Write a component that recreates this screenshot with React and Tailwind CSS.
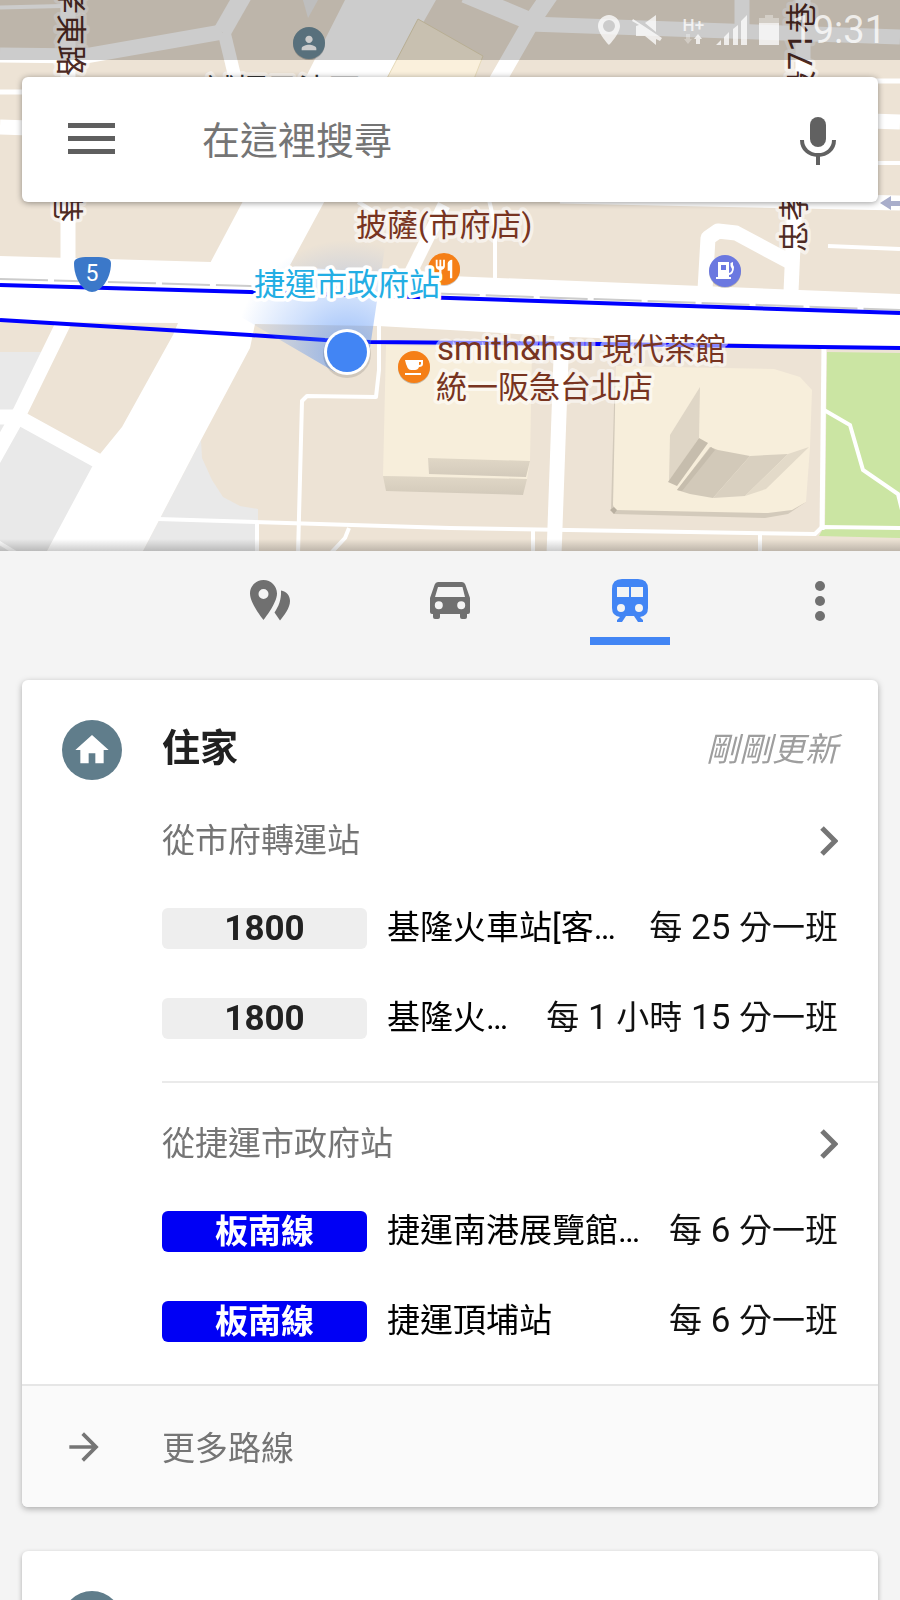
import React from 'react';
import { MdArrowForward, MdHome, MdPerson, MdRestaurant } from 'react-icons/md';

const departures = [
  {
    from: '從市府轉運站',
    routes: [
      { line: '1800', to: '基隆火車站[客…', every: '每 25 分一班', badge: 'bg-[#eeeeee] text-[#212121] text-[35px]' },
      { line: '1800', to: '基隆火…', every: '每 1 小時 15 分一班', badge: 'bg-[#eeeeee] text-[#212121] text-[35px]' },
    ],
  },
  {
    from: '從捷運市政府站',
    routes: [
      { line: '板南線', to: '捷運南港展覽館…', every: '每 6 分一班', badge: 'bg-[#0000f5] text-white' },
      { line: '板南線', to: '捷運頂埔站', every: '每 6 分一班', badge: 'bg-[#0000f5] text-white' },
    ],
  },
];

const roads = [
  { w: 4, d: 'M0 7.5L62 6' },
  { w: 15, d: 'M0 55L85 56L222 32' },
  { w: 18, d: 'M222 32L246 -10' },
  { w: 13, d: 'M224 32L238 90' },
  { w: 15, d: 'M68 0V262' },
  { w: 5, d: 'M0 92H30' },
  { w: 15, d: 'M0 127L30 128' },
  { w: 18, d: 'M465 -6L532 22' },
  { w: 17, d: 'M556 -14L530 24L495 85' },
  { w: 15, d: 'M530 24L900 37' },
  { w: 15, d: 'M742 -5V32' },
  { w: 15, d: 'M803 -5V80' },
  { w: 5, d: 'M870 81H900' },
  { w: 15, d: 'M870 121L900 122' },
  { w: 4, d: 'M870 163H900' },
  { w: 15, d: 'M560 196L900 203' },
  { w: 15, d: 'M795 200L791 292' },
  { w: 15, d: 'M705 290L708 238L718 231L736 233L792 263' },
  { w: 4, d: 'M828 246L900 249' },
  { w: 4, d: 'M489 200L495 225V280' },
  { w: 13, d: 'M444 205L402 290' },
  { w: 4, d: 'M358 202L386 219' },
  { w: 15, d: 'M64 322L20 412L-8 462' },
  { w: 15, d: 'M-5 417H18L98 461' },
  { w: 4, d: 'M-2 542L16 553' },
  { w: 4, d: 'M158 519L450 528L815 534L822 527L900 528' },
  { w: 4, d: 'M257 522V555' },
  { w: 4, d: 'M298 555L302 401L307 396L376 397L379 370V322' },
  { w: 4, d: 'M349 528L345 538L330 554' },
  { w: 4, d: 'M533 530V555' },
  { w: 15, d: 'M562 330L554 555' },
  { w: 4, d: 'M760 534V555' },
  { w: 5, d: 'M824 345L822 530' },
];

const CupIcon = (props) => (
  <svg {...props} width="22" height="22" viewBox="0 0 22 22" fill="#fff">
    <path
      fillRule="evenodd"
      d="M2 4H20V8Q20 11 16 11Q15 14 12 14H8Q4 14 2 4zM16 6V9Q18 9 18 7.500V6z"
    />
    <path d="M2 17H18V19H2z" />
  </svg>
);

const PumpIcon = (props) => (
  <svg {...props} width="22" height="22" viewBox="0 0 22 22" fill="#fff">
    <path fillRule="evenodd" d="M4 2H15V17H17V19H2V17H4zM7 5V10H12V5z" />
    <path d="M15 13Q18 12 18 9L16.500 6V3L19 2V5L20 7Q20 14 15 15z" />
  </svg>
);

const Marker = ({ cx, cy, fill, icon: Icon }) => (
  <g>
    <circle cx={cx} cy={cy + 1} r="16" fill="#000" opacity="0.2" />
    <circle cx={cx} cy={cy} r="16" fill={fill} />
    <Icon x={cx - 11} y={cy - 11} size={22} color="#fff" />
  </g>
);

const MapView = () => (
  <svg
    className="absolute inset-0 h-full w-full"
    viewBox="0 0 900 551"
    preserveAspectRatio="xMidYMin slice"
    role="img"
    aria-label="地圖"
  >
    <defs>
      <radialGradient id="beam" gradientUnits="userSpaceOnUse" cx="347" cy="352" r="112">
        <stop offset="0" stopColor="#4285f4" stopOpacity="0.55" />
        <stop offset="0.5" stopColor="#4285f4" stopOpacity="0.25" />
        <stop offset="1" stopColor="#4285f4" stopOpacity="0" />
      </radialGradient>
      <linearGradient id="wall" x1="0" y1="0" x2="0" y2="1">
        <stop offset="0" stopColor="#e0d7c6" />
        <stop offset="1" stopColor="#d3cabb" />
      </linearGradient>
    </defs>

    <rect width="900" height="551" fill="#ede3d5" />

    {/* grey blocks and the park */}
    <path d="M0 352H45L10 415L100 460L47 551H0z" fill="#e9e9e9" />
    <path d="M201 440L202 458L212 480L223 497L240 506L258 509V551H143z" fill="#e9e9e9" />
    <path d="M30 405L40 420L62 443L70 450L100 454L50 400z" fill="#ede3d5" />
    <path d="M827 352L900 353V538L819 536L825 525z" fill="#cbe5a3" />
    <path d="M824 410L850 425L863 470L898 494L902 510" fill="none" stroke="#fff" strokeWidth="4" />

    {/* main avenues */}
    <path d="M345 0H436L388 84L289 267H208L242 203z" fill="#fff" />
    <path d="M0 256L211 262L289 267L450 276L900 294V349L730 343L570 337L450 330L378 326L255 324L250 348L201 440L143 551H47L92 467L100 454L122 427L173 335L178 323L0 322z" fill="#fff" />
    <g fill="none" stroke="#fff" strokeLinejoin="round">
      {roads.map((road) => (
        <path key={road.d} d={road.d} strokeWidth={road.w} />
      ))}
    </g>

    {/* buildings */}
    <path d="M418 19L483 56L472 84H384z" fill="#faf0dc" stroke="#e6dab9" />
    <path d="M386 345L532 349L530 461L527 479L383 476z" fill="#f7eedb" />
    <path d="M428 458L530 461L526 477L429 474z" fill="url(#wall)" />
    <path d="M383 476L527 479L523 495L386 491z" fill="url(#wall)" />
    <path d="M615 370L611 510L614 514L765 518L788 514L806 502L790 505L616 500z" fill="#d3cabb" />
    <path d="M616 366L774 369L800 377L812 390L810 447L806 502L792 510L768 513L615 510L613 505z" fill="#f7eedb" />
    <path d="M610 510L614 507L617 510L614 514z" fill="#b9b0a1" />
    <path d="M700 387L670 435L669 482L699 438z" fill="#dfd6c6" />
    <path d="M699 438L708 443L677 486L668 482z" fill="#c6bdad" />
    <path d="M710 447L718 450L750 456L713 498L690 494L677 490z" fill="#d2c9b9" />
    <path d="M750 456L788 454L745 496L713 498z" fill="#d9d0c0" />
    <path d="M788 454L809 447L766 489L745 496z" fill="#e3dac9" />
    <path d="M711 447L715 450L682 491L677 490z" fill="#c6bdad" />

    {/* one-way arrow */}
    <path d="M880 203L891 196V201H900V206H891V210z" fill="#a9aecb" />

    {/* rail and metro lines */}
    <path d="M0 279L250 286L450 294L900 310" fill="none" stroke="#cccccc" strokeWidth="2" strokeDasharray="48 6" />
    <path d="M0 285L250 292L450 298L900 313" fill="none" stroke="#0000ff" strokeWidth="4" />
    <path d="M0 320L250 335L325 340L370 342L600 344L900 348" fill="none" stroke="#0000ff" strokeWidth="4" />

    {/* current position with heading beam */}
    <path d="M347 352L335 372L222 306L275 240H386L370 348z" fill="url(#beam)" />
    <circle cx="347" cy="354" r="24" fill="#000" opacity="0.12" />
    <circle cx="347" cy="352" r="23" fill="#fff" />
    <circle cx="347" cy="352" r="20" fill="#4285f4" />

    <path d="M308 18L303 0H318z" fill="#eeeeee" />
    <Marker cx={309} cy={43} fill="#6f8d9b" icon={MdPerson} />
    <Marker cx={444} cy={269} fill="#f57f17" icon={MdRestaurant} />
    <Marker cx={414} cy={367} fill="#f57f17" icon={CupIcon} />
    <Marker cx={725} cy={271} fill="#6b78e0" icon={PumpIcon} />
    <path d="M74 263C74 257 83 257 92 257S111 257 111 263C111 280 100 292 92 292S74 280 74 263z" fill="#3b78c9" />

    <g
      fontFamily="Roboto, 'Noto Sans CJK TC', sans-serif"
      fontSize="31"
      fill="#783421"
      stroke="#ffffff"
      strokeOpacity="0.55"
      strokeWidth="7"
      strokeLinejoin="round"
      paintOrder="stroke"
    >
      <text x="356" y="236">披薩(市府店)</text>
      <text x="437" y="360">
        <tspan fontSize="33">smith&amp;hsu </tspan>現代茶館
      </text>
      <text x="436" y="398">統一阪急台北店</text>
      <text x="254" y="295" fill="#23aee4" strokeOpacity="1">捷運市政府站</text>
      <g fill="#4e2b24">
        <text transform="translate(60 -17) rotate(90)">孝東路</text>
        <text transform="translate(57 191) rotate(90)">巷</text>
        <text transform="translate(812 101) rotate(-90)">
          段<tspan fontSize="33">71</tspan>巷
        </text>
        <text transform="translate(805 252) rotate(-90)">忠孝</text>
      </g>
      <text x="205" y="101" fill="#333333">誠揮己沾百</text>
    </g>
    <text x="92" y="281" textAnchor="middle" fontFamily="Roboto, sans-serif" fontSize="23" fill="#fff">5</text>
  </svg>
);

const StatusBar = () => (
  <div className="relative flex h-[60px] items-center justify-end gap-3 bg-black/20 pr-[14px] text-white/75">
    <svg className="h-[30px] w-[22px]" viewBox="0 0 22 30" fill="currentColor">
      <path fillRule="evenodd" d="M11 0C5 0 0 5 0 11c0 8 11 19 11 19s11-11 11-19C22 5 17 0 11 0zm0 5a6 6 0 110 12 6 6 0 010-12z" />
    </svg>
    <svg className="h-[30px] w-[30px]" viewBox="0 0 30 30" fill="currentColor">
      <path d="M24 0V17L13 8zM1 4L30 23L28 26L24 24V30L13 21H4V11L7 10L0 6z" />
    </svg>
    <div className="ml-2 flex w-[22px] flex-col items-center">
      <span className="text-[17px] leading-[18px] font-medium">H+</span>
      <svg className="h-[10px] w-[18px]" viewBox="0 0 18 10" fill="currentColor">
        <path opacity="0.4" d="M2 0h4v5h2l-4 5-4-5h2z" />
        <path d="M12 10h4V5h2l-4-5-4 5h2z" />
      </svg>
    </div>
    <svg className="h-[30px] w-[31px]" viewBox="0 0 31 30" fill="currentColor">
      <path d="M0 30L5 25V30zM8 30V22L13 17V30zM17 30V14L22 10V30zM25 30V6L31 0V30z" />
    </svg>
    <svg className="h-[30px] w-5" viewBox="0 0 20 30" fill="currentColor">
      <path opacity="0.45" d="M6 0h8v3h6v5H0V3h6z" />
      <path d="M0 8h20v22H0z" />
    </svg>
    <time className="text-[38px] leading-[60px] font-normal">19:31</time>
  </div>
);

const SearchBar = () => (
  <form className="relative mx-[22px] mt-[17px] flex h-[125px] items-center rounded-md bg-white pt-[2px] pr-[30px] pl-[46px] shadow-[0_1px_6px_rgba(0,0,0,0.4)]">
    <button type="button" aria-label="選單" className="shrink-0 text-[#5f5f5f]">
      <svg className="h-12 w-12" viewBox="0 0 48 48" fill="currentColor">
        <path d="M0 6h47v5H0zM0 19h47v5H0zM0 32h47v5H0z" />
      </svg>
    </button>
    <input
      type="text"
      aria-label="搜尋"
      placeholder="在這裡搜尋"
      className="ml-[86px] h-16 min-w-0 flex-1 bg-transparent text-[38px] outline-none placeholder:text-[#757575]"
    />
    <button type="button" aria-label="語音搜尋" className="flex w-[60px] shrink-0 justify-center text-[#616161]">
      <svg className="h-12 w-9" viewBox="0 0 36 48">
        <rect x="10" y="0" width="16" height="30" rx="8" fill="currentColor" />
        <path d="M2 23C2 32 9 38 18 38S34 32 34 23M18 38V48" fill="none" stroke="currentColor" strokeWidth="4" />
      </svg>
    </button>
  </form>
);

const PlacesIcon = () => (
  <svg className="h-12 w-12" viewBox="0 0 48 48" fill="currentColor">
    <path fillRule="evenodd" d="M17.5 3C10 3 4 9 4 16.5C4 26.5 17.5 43 17.5 43S31 26.5 31 16.5C31 9 25 3 17.5 3zM17.5 12a5 5 0 110 10 5 5 0 010-10z" />
    <path d="M35 13.5C40.500 14.500 44 18.500 44 24C44 31 38 38.500 34 43.500L28.500 35.500C32.500 29.500 35.500 23 35 13.500z" />
  </svg>
);

const CarIcon = () => (
  <svg className="h-12 w-12" viewBox="0 0 48 48" fill="currentColor">
    <path
      fillRule="evenodd"
      d="M12 5H36Q38.500 5 39.300 7.500L44 21V35Q44 37 42 37H41V40Q41 42 39 42H36Q34 42 34 40V37H14V40Q14 42 12 42H9Q7 42 7 40V37H6Q4 37 4 35V21L8.700 7.500Q9.500 5 12 5zM12 10L9 20H39L36.500 10zM12.800 24.300a4 4 0 100 8 4 4 0 000-8zM35.200 24.300a4 4 0 100 8 4 4 0 000-8z"
    />
  </svg>
);

const TrainIcon = () => (
  <svg className="h-12 w-12" viewBox="0 0 48 48" fill="currentColor">
    <path
      fillRule="evenodd"
      d="M16 2H32Q42 2 42 12V31Q42 39 34 40L37 43V45H32L28 39H20L16 45H11V43L14 40Q6 39 6 31V12Q6 2 16 2zM11 10V20H23V10zM25 10V20H37V10zM15 27a4 4 0 100 8 4 4 0 000-8zM33 27a4 4 0 100 8 4 4 0 000-8z"
    />
  </svg>
);

const MoreIcon = () => (
  <svg className="h-12 w-12" viewBox="0 0 48 48" fill="currentColor">
    <circle cx="24" cy="9" r="5" />
    <circle cx="24" cy="24" r="5" />
    <circle cx="24" cy="39" r="5" />
  </svg>
);

const TabBar = () => (
  <nav className="grid h-[94px] grid-cols-5 text-[#707070]">
    <button type="button" aria-label="探索" className="col-start-2 flex justify-center pt-[26px]">
      <PlacesIcon />
    </button>
    <button type="button" aria-label="開車" className="flex justify-center pt-[26px]">
      <CarIcon />
    </button>
    <button type="button" aria-label="大眾運輸" className="flex flex-col items-center justify-between pt-[26px] text-[#4285f4]">
      <TrainIcon />
      <span className="h-2 w-20 bg-[#4285f4]" />
    </button>
    <button type="button" aria-label="更多選項" className="flex justify-center pt-[26px] pl-5">
      <MoreIcon />
    </button>
  </nav>
);

const HomeBadge = () => (
  <span className="flex h-[60px] w-[60px] shrink-0 items-center justify-center rounded-full bg-[#607d8b] text-white">
    <MdHome className="h-10 w-10" />
  </span>
);

// digits are set a little larger than the characters around them
const Frequency = ({ text }) => (
  <span className="ml-5 shrink-0 whitespace-pre text-[#111111]">
    {text.split(/([\d ]+)/).map((part, index) =>
      index % 2 ? (
        <span key={index} className="text-[35px]">
          {part}
        </span>
      ) : (
        part
      )
    )}
  </span>
);

const Departure = ({ from, routes, divided }) => (
  <section className={`ml-[140px] pt-[31px] pb-[18px] ${divided ? 'border-b-2 border-[#eaeaea]' : ''}`}>
    <a href="#" className="mr-10 mb-3 flex h-[60px] items-center justify-between text-[#757575]">
      <h3>{from}</h3>
      <svg className="h-[30px] w-[18px]" viewBox="0 0 18 30" fill="none" stroke="currentColor" strokeWidth="5">
        <path d="M2 2l13 13-13 13" />
      </svg>
    </a>
    <ul className="mr-10">
      {routes.map((route) => (
        <li key={route.to} className="flex h-[90px] items-center text-black">
          <span className={`h-[41px] w-[205px] shrink-0 rounded-md text-center leading-[42px] font-bold ${route.badge}`}>
            {route.line}
          </span>
          <span className="ml-5 min-w-0 flex-1 truncate">{route.to}</span>
          <Frequency text={route.every} />
        </li>
      ))}
    </ul>
  </section>
);

const HomeCard = () => (
  <article className="mx-[22px] overflow-hidden rounded-md bg-white">
    <header className="flex items-center pt-10 pr-10 pl-10">
      <HomeBadge />
      <h2 className="ml-10 flex-1 pb-1 text-[38px] font-bold text-[#212121]">住家</h2>
      <span className="text-[#9e9e9e] italic">剛剛更新</span>
    </header>
    {departures.map((departure, index) => (
      <Departure key={departure.from} {...departure} divided={index < departures.length - 1} />
    ))}
    <a href="#" className="flex h-[123px] items-center border-t-2 border-[#e6e6e6] bg-[#fafafa] pl-10 text-[#757575]">
      <MdArrowForward className="h-11 w-11" />
      <span className="ml-14 pt-1">更多路線</span>
    </a>
  </article>
);

const App = () => (
  <main
    lang="zh-Hant"
    className="h-screen overflow-hidden bg-[#f4f4f4] font-[Roboto,'Noto_Sans_CJK_TC',sans-serif] text-[33px] leading-[48px]"
  >
    <div className="relative h-[551px] overflow-hidden">
      <MapView />
      <StatusBar />
      <SearchBar />
      <div className="absolute inset-x-0 bottom-0 h-3 bg-linear-to-t from-black/20 to-transparent" />
    </div>
    <TabBar />
    <div className="mt-[35px] flex flex-col gap-11">
      <div className="rounded-md drop-shadow-[0_2px_3px_rgba(0,0,0,0.3)]">
        <HomeCard />
      </div>
      <article className="mx-[22px] rounded-md bg-white p-10 shadow-[0_2px_5px_rgba(0,0,0,0.3)]">
        <HomeBadge />
      </article>
    </div>
  </main>
);

export default App;
